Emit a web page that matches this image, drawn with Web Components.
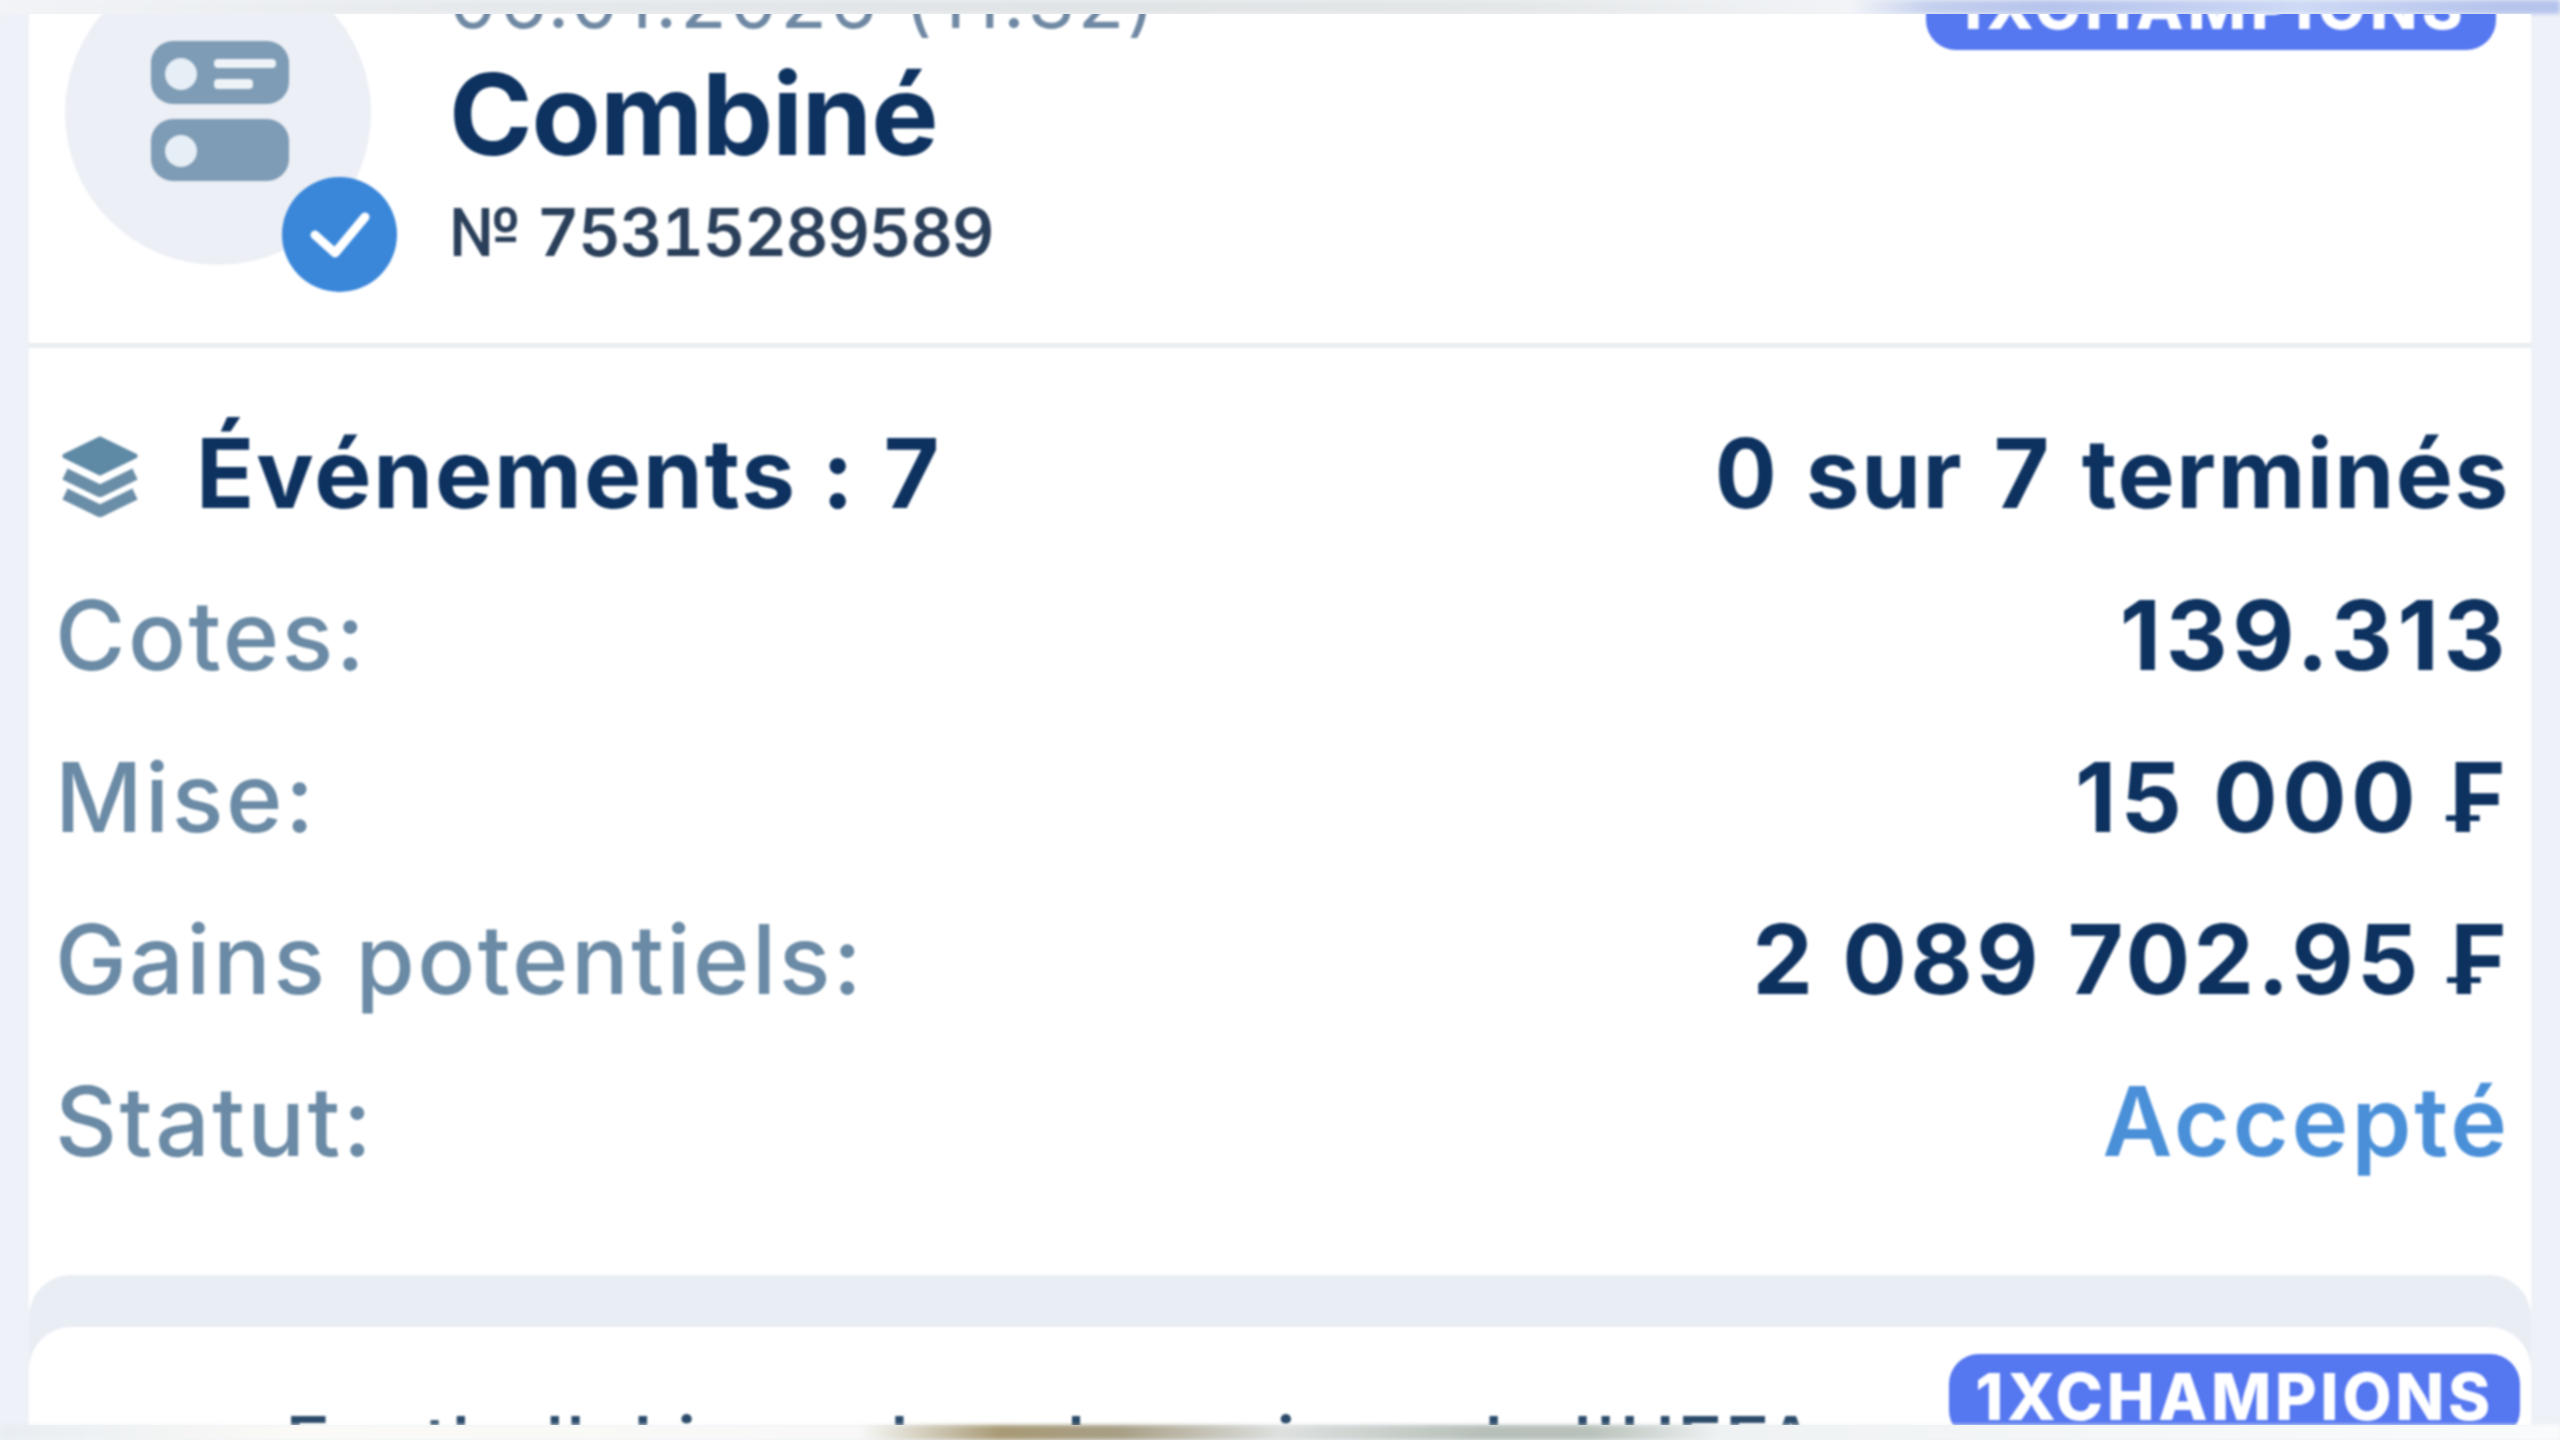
<!DOCTYPE html>
<html lang="fr">
<head>
<meta charset="utf-8">
<title>Combiné</title>
<style>
  html, body { margin: 0; background: #eef2f8; }
</style>
</head>
<body>
<bet-screen>
  <bet-header date="06.01.2026 (11:32)" title="Combiné" number="№ 75315289589"></bet-header>
  <bet-summary>
    <bet-row kind="head" label="Événements : 7" value="0 sur 7 terminés"></bet-row>
    <bet-row style="--track: 4.6px" label="Cotes:" value="139.313"></bet-row>
    <bet-row style="--track: 4.2px" label="Mise:" value="15 000 ₣"></bet-row>
    <bet-row style="--track: 3.3px" label="Gains potentiels:" value="2 089 702.95 ₣"></bet-row>
    <bet-row kind="status" label="Statut:" value="Accepté"></bet-row>
  </bet-summary>
  <next-card title="Football. Ligue des champions de l'UEFA"></next-card>
</bet-screen>

<script>
const FONT = `"Inter", "Liberation Sans", sans-serif`;

class BetScreen extends HTMLElement {
  constructor() {
    super();
    this.attachShadow({ mode: 'open' }).innerHTML = `
      <style>
        :host {
          display: flex;
          flex-direction: column;
          width: 2560px;
          height: 1440px;
          overflow: hidden;
          background: #eef2f8;
          font-family: ${FONT};
        }
        .strip { flex: none; filter: blur(2px); }
        .top {
          height: 14px;
          background: linear-gradient(90deg, #f2f4f7 0, #e6e9ec 500px, #e0e4e6 1100px, #e4e7e8 1500px, #f2f4f7 1850px, #c5d0ee 1930px, #b6c3ec 2050px, #cdd9f5 2300px, #b6c3ec 2500px);
        }
        .bottom {
          height: 15px;
          background: linear-gradient(90deg, #e8edf2 0, #fbfaf6 300px, #f7f8f7 860px, #a89a75 1000px, #a89f86 1120px, #dde0df 1280px, #b6c0b8 1480px, #b8c2ba 1590px, #eff2f3 1720px, #fafbfc 2560px);
        }
        main {
          flex: 1;
          min-height: 0;
          overflow: hidden;
          padding: 0 29px;
        }
        .sheet { background: #fff; filter: blur(1.3px); }
      </style>
      <div class="strip top"></div>
      <main><div class="sheet"><slot></slot></div></main>
      <div class="strip bottom"></div>
    `;
  }
}

class ChampBadge extends HTMLElement {
  constructor() {
    super();
    this.attachShadow({ mode: 'open' }).innerHTML = `
      <style>
        :host {
          display: inline-flex;
          align-items: center;
          justify-content: center;
          box-sizing: border-box;
          background: #5577f0;
          color: #fff;
          border-radius: 30px;
          font-weight: 800;
          font-size: 64px;
          letter-spacing: 3.6px;
          line-height: 1;
          white-space: nowrap;
        }
      </style>
      <slot></slot>
    `;
  }
}

class BetHeader extends HTMLElement {
  constructor() {
    super();
    this.attachShadow({ mode: 'open' }).innerHTML = `
      <style>
        :host {
          display: flex;
          box-sizing: border-box;
          height: 387px;
          margin-top: -53px;
          padding-left: 36px;
          border-bottom: 5px solid #e9edf2;
        }
        .avatar {
          position: relative;
          flex: none;
          width: 306px;
          height: 304px;
          border-radius: 50%;
          background: #eceff5;
          display: flex;
          align-items: center;
          justify-content: center;
          padding: 0 0 4px 3px;
          box-sizing: border-box;
        }
        .ok { position: absolute; left: 217px; top: 216px; }
        .text { margin-left: 78px; margin-top: -11px; min-width: 0; }
        .date { font-size: 76px; line-height: 100px; font-weight: 400; color: #6f88a3; letter-spacing: 3px; }
        .title { font-size: 113px; line-height: 128px; font-weight: 700; color: #0d3260; letter-spacing: -1px; }
        .num { font-size: 66px; line-height: 78px; margin-top: 15px; font-weight: 600; color: #2a3f5a; letter-spacing: -1.2px; font-feature-settings: "tnum"; }
        champ-badge { width: 570px; height: 86px; margin-left: auto; margin-right: 35px; margin-top: 3px; font-size: 62px; letter-spacing: 4.4px; }
      </style>
      <div class="avatar">
        <svg width="138" height="140" viewBox="0 0 138 140">
          <rect x="0" y="0" width="138" height="63" rx="22" fill="#7e9cb5"/>
          <circle cx="30" cy="33" r="16" fill="#e6eef6"/>
          <rect x="63" y="18" width="62" height="9" rx="4" fill="#eef3f8"/>
          <rect x="63" y="38" width="39" height="10" rx="4" fill="#eef3f8"/>
          <rect x="0" y="78" width="138" height="62" rx="22" fill="#7e9cb5"/>
          <circle cx="30" cy="110" r="16" fill="#e6eef6"/>
        </svg>
        <svg class="ok" width="115" height="115" viewBox="0 0 115 115">
          <circle cx="57.5" cy="57.5" r="57.5" fill="#3a87da"/>
          <path d="M33 58 L53 76 L83 40" fill="none" stroke="#fff" stroke-width="9" stroke-linecap="round" stroke-linejoin="round"/>
        </svg>
      </div>
      <div class="text">
        <div class="date"></div>
        <div class="title"></div>
        <div class="num"></div>
      </div>
      <champ-badge>1XCHAMPIONS</champ-badge>
    `;
  }

  connectedCallback() {
    this.shadowRoot.querySelector('.date').textContent = this.getAttribute('date') || '';
    this.shadowRoot.querySelector('.title').textContent = this.getAttribute('title') || '';
    this.shadowRoot.querySelector('.num').textContent = this.getAttribute('number') || '';
  }
}

class BetSummary extends HTMLElement {
  constructor() {
    super();
    this.attachShadow({ mode: 'open' }).innerHTML = `
      <style>
        :host {
          display: block;
          padding: 44px 21px 73px 26px;
        }
      </style>
      <slot></slot>
    `;
  }
}

class BetRow extends HTMLElement {
  constructor() {
    super();
    this.attachShadow({ mode: 'open' }).innerHTML = `
      <style>
        :host {
          display: flex;
          align-items: center;
          justify-content: space-between;
          height: 162px;
          line-height: 162px;
          font-size: 96px;
          white-space: nowrap;
        }
        .label { display: flex; align-items: center; color: #6a8aa5; font-weight: 500; letter-spacing: 2.5px; }
        .value { color: #0d3260; font-weight: 700; letter-spacing: var(--track, 2.6px); }
        svg { display: none; margin: 6px 58px 0 7px; }
        :host([kind="head"]) .label { color: #0d3260; font-weight: 700; letter-spacing: 2px; font-feature-settings: "tnum"; }
        :host([kind="head"]) .value { letter-spacing: 1.6px; font-feature-settings: "tnum"; }
        :host([kind="head"]) svg { display: block; }
        :host([kind="status"]) .value { color: #4a90d9; font-weight: 600; letter-spacing: 3px; }
      </style>
      <div class="label">
        <svg width="76" height="81" viewBox="0 0 76 81">
          <path d="M38 3 L73 20 L38 37 L3 20 Z" fill="#5f8aa6" stroke="#5f8aa6" stroke-width="5" stroke-linejoin="round"/>
          <path d="M3 38 L38 55 L73 38" fill="none" stroke="#6b8ea8" stroke-width="12" stroke-linejoin="round"/>
          <path d="M3 58 L38 75 L73 58" fill="none" stroke="#6b8ea8" stroke-width="12" stroke-linejoin="round"/>
        </svg>
        <span class="text"></span>
      </div>
      <div class="value"></div>
    `;
  }

  connectedCallback() {
    this.shadowRoot.querySelector('.text').textContent = this.getAttribute('label') || '';
    this.shadowRoot.querySelector('.value').textContent = this.getAttribute('value') || '';
  }
}

class NextCard extends HTMLElement {
  constructor() {
    super();
    this.attachShadow({ mode: 'open' }).innerHTML = `
      <style>
        :host {
          display: block;
          padding-top: 52px;
          background: #e9edf4;
          border-radius: 42px 42px 0 0;
        }
        .card {
          display: flex;
          justify-content: space-between;
          background: #fff;
          border-radius: 42px 42px 0 0;
          height: 160px;
          padding: 27px 11px 0 256px;
        }
        .title {
          margin-top: 45px;
          font-size: 76px;
          line-height: 88px;
          font-weight: 500;
          letter-spacing: 1.6px;
          color: #2a4a6a;
          white-space: nowrap;
        }
        champ-badge { width: 571px; height: 86px; flex: none; }
      </style>
      <div class="card">
        <div class="title"></div>
        <champ-badge>1XCHAMPIONS</champ-badge>
      </div>
    `;
  }

  connectedCallback() {
    this.shadowRoot.querySelector('.title').textContent = this.getAttribute('title') || '';
  }
}

customElements.define('bet-screen', BetScreen);
customElements.define('champ-badge', ChampBadge);
customElements.define('bet-header', BetHeader);
customElements.define('bet-summary', BetSummary);
customElements.define('bet-row', BetRow);
customElements.define('next-card', NextCard);
</script>
</body>
</html>
